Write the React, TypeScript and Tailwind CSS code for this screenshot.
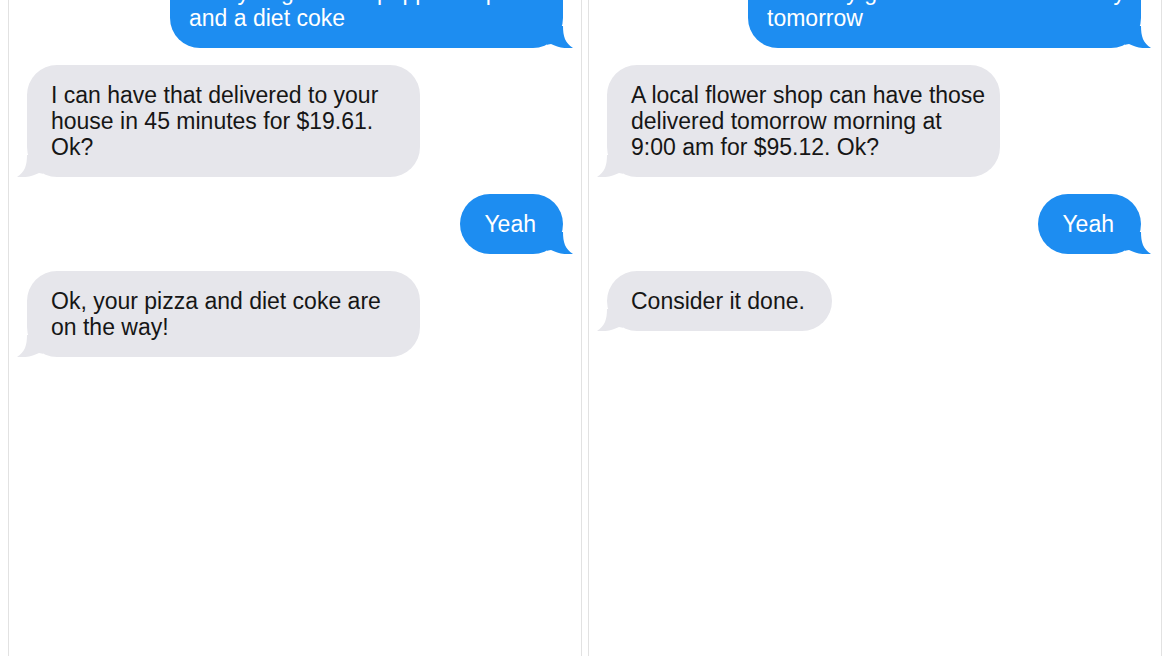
import React from "react";

type Msg = { from: "me" | "them"; lines: string[]; wide?: boolean };

const pizza: Msg[] = [
  { from: "me", lines: ["Can you get me a pepperoni pizza", "and a diet coke"], wide: true },
  { from: "them", lines: ["I can have that delivered to your", "house in 45 minutes for $19.61.", "Ok?"], wide: true },
  { from: "me", lines: ["Yeah"] },
  { from: "them", lines: ["Ok, your pizza and diet coke are", "on the way!"], wide: true },
];

const flowers: Msg[] = [
  { from: "me", lines: ["Send my girlfriend some flowers by", "tomorrow"], wide: true },
  {
    from: "them",
    lines: ["A local flower shop can have those", "delivered tomorrow morning at", "9:00 am for $95.12. Ok?"],
    wide: true,
  },
  { from: "me", lines: ["Yeah"] },
  { from: "them", lines: ["Consider it done."] },
];

function Tail({ side }: { side: "left" | "right" }) {
  const isMe = side === "right";
  return (
    <svg
      width="26"
      height="22"
      viewBox="0 0 26 22"
      className={
        isMe
          ? "absolute -right-[10px] bottom-0 text-[#1d8df1]"
          : "absolute -left-[10px] bottom-0 -scale-x-100 text-[#e6e6eb]"
      }
    >
      <path d="M0 0 H16 C16 10 18 17 26 22 C18 23 10 21 4 18 L0 18.7 Z" fill="currentColor" />
    </svg>
  );
}

function Bubble({ msg, first }: { msg: Msg; first?: boolean }) {
  const isMe = msg.from === "me";
  const pad = first && isMe ? "pl-[19px] pr-4" : msg.wide ? "pl-[24px] pr-4" : "pl-[24px] pr-[27px]";
  return (
    <div className={`flex ${isMe ? "justify-end" : "justify-start"} ${first ? "-mt-[38px]" : ""}`}>
      <div
        className={`relative rounded-[30px] py-[17px] text-[23px] leading-[26px] ${pad} ${
          msg.wide ? "w-[393px]" : ""
        } ${isMe ? "bg-[#1d8df1] text-white" : "bg-[#e6e6eb] text-[#161616]"}`}
      >
        <p className="relative z-10 whitespace-nowrap">
          {msg.lines.map((l, i) => (
            <React.Fragment key={i}>
              {l}
              {i < msg.lines.length - 1 && <br />}
            </React.Fragment>
          ))}
        </p>
        <Tail side={isMe ? "right" : "left"} />
      </div>
    </div>
  );
}

function Thread({ msgs, right }: { msgs: Msg[]; right?: boolean }) {
  return (
    <div
      className={`flex h-[656px] w-[574px] flex-col gap-[17px] overflow-hidden border-x border-[#e2e2e2] bg-white pl-[18px] ${
        right ? "pr-[20px]" : "pr-[18px]"
      }`}
    >
      {msgs.map((m, i) => (
        <Bubble key={i} msg={m} first={i === 0} />
      ))}
    </div>
  );
}

export default function App() {
  return (
    <div
      className="flex h-[656px] w-[1168px] gap-[6px] overflow-hidden bg-white pl-2"
      style={{ fontFamily: '"Liberation Sans", Arial, sans-serif' }}
    >
      <Thread msgs={pizza} />
      <Thread msgs={flowers} right />
    </div>
  );
}
